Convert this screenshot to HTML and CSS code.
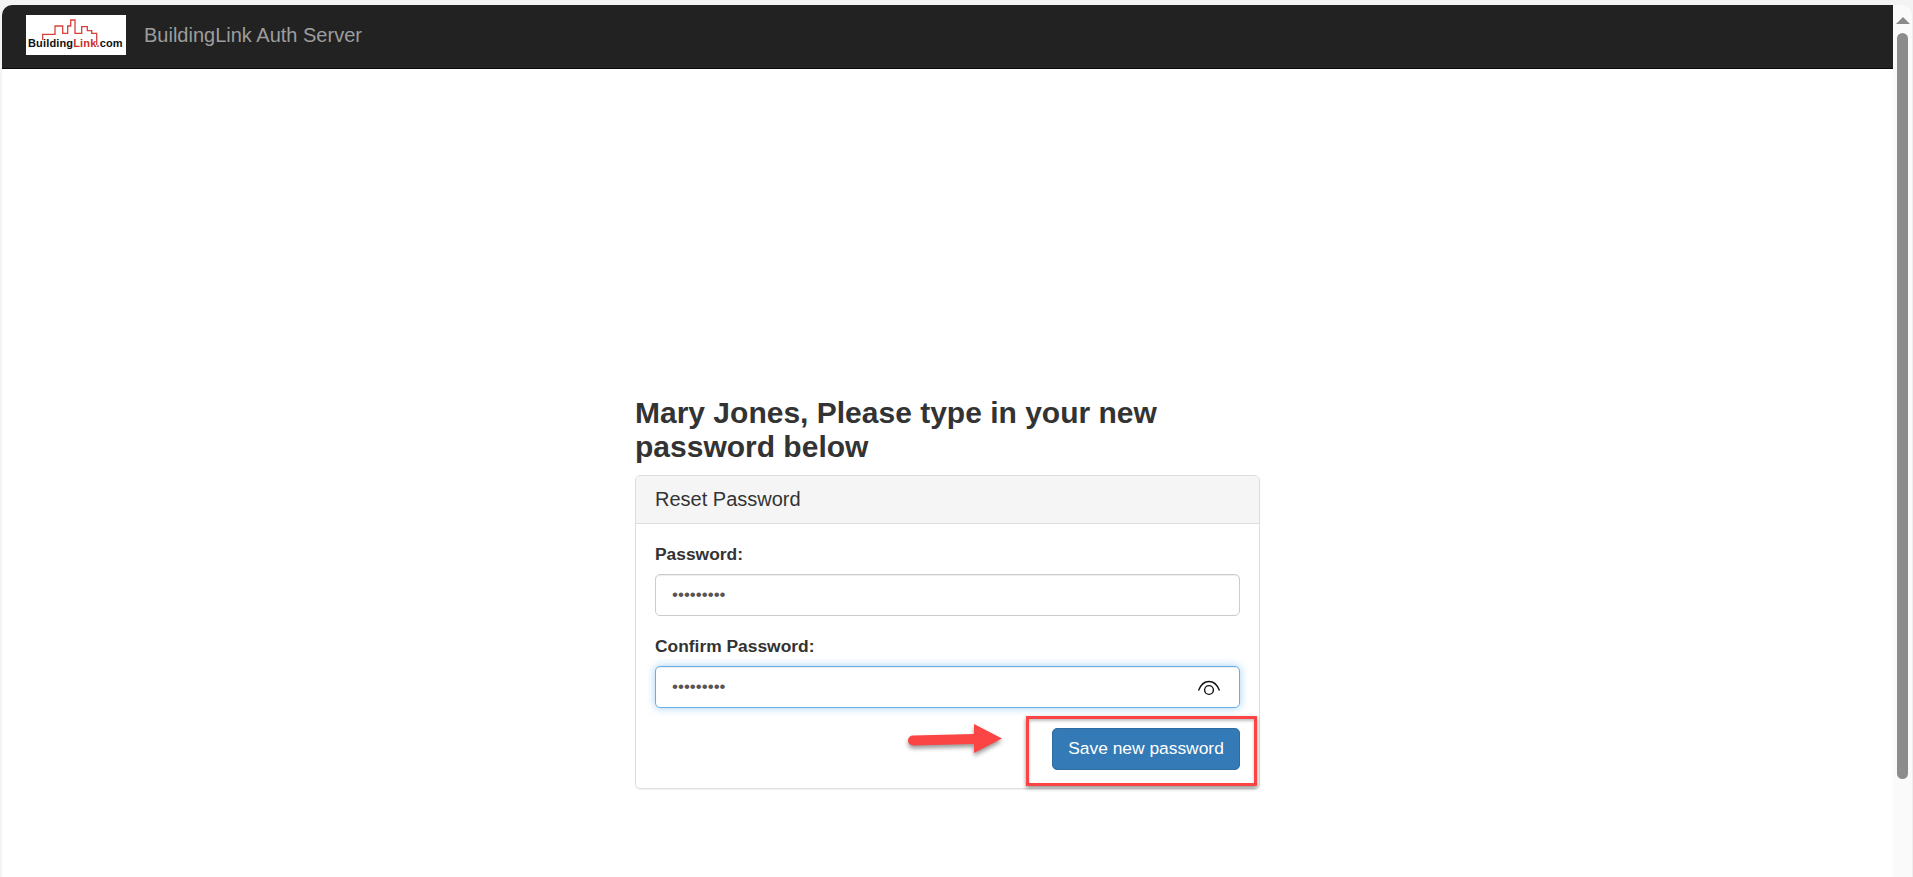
FILE: index.html
```
<!DOCTYPE html>
<html lang="en">
<head>
<meta charset="utf-8">
<title>BuildingLink Auth Server</title>
<link rel="stylesheet" href="styles.css">
</head>
<body>
<div class="window">
  <div class="main">
    <nav class="navbar">
      <div class="logo">
        <svg class="logo-skyline" viewBox="0 0 100 40" width="100" height="40" aria-hidden="true">
          <path d="M16.7 25V19.3H29V11H36.7V18.3H41.7V11H44.7V5H49V18.3H55.7V11.7H61.3V15.7H65.7V18.3H70.7V30" fill="none" stroke="#d8403c" stroke-width="1.3"/>
        </svg>
        <span class="logo-text">Building<span class="logo-red">Link</span><span class="logo-dot">.</span>com</span>
      </div>
      <a class="brand">BuildingLink Auth Server</a>
    </nav>
    <div class="content">
      <div class="column">
        <h1 class="title">Mary Jones, Please type in your new password below</h1>
        <div class="card">
          <div class="card-header">Reset Password</div>
          <form class="card-body">
            <div class="group">
              <label class="label">Password:</label>
              <input class="input" type="password" value="123456789">
            </div>
            <div class="group">
              <label class="label">Confirm Password:</label>
              <div class="input-wrap">
                <input class="input input-focus" type="password" value="123456789">
                <svg class="eye" viewBox="0 0 24 16" width="24" height="16" aria-hidden="true">
                  <path d="M1.5 10.5C4 4 8 1.5 12 1.5S20 4 22.5 10.5" fill="none" stroke="#111" stroke-width="1.4"/>
                  <circle cx="12" cy="10" r="4.4" fill="none" stroke="#111" stroke-width="1.4"/>
                </svg>
              </div>
            </div>
            <div class="actions">
              <button class="btn" type="button">Save new password</button>
            </div>
          </form>
          <div class="highlight"></div>
          <svg class="arrow" viewBox="0 0 100 36" width="100" height="36" aria-hidden="true">
            <path d="M5 11.5L66 10V0L94 14.5L66 29V20L5 21.5A5 5 0 0 1 5 11.5Z" fill="#fb4444"/>
          </svg>
        </div>
      </div>
    </div>
  </div>
  <div class="scrollbar">
    <div class="scroll-up"></div>
    <div class="scroll-thumb"></div>
  </div>
</div>
</body>
</html>
```
FILE: styles.css
```
* { box-sizing: border-box; }
html, body { margin: 0; height: 100%; overflow: hidden; }
body {
  background: #f3f3f3;
  font-family: "Liberation Sans", Arial, sans-serif;
  color: #333;
}
.window {
  display: flex;
  height: 877px;
  padding: 5px 0 0 2px;
}
.main {
  flex: 1;
  min-width: 0;
  display: flex;
  flex-direction: column;
  background: #fff;
  border-top-left-radius: 10px;
}
.navbar {
  height: 64px;
  flex: none;
  display: flex;
  align-items: center;
  gap: 18px;
  padding: 0 0 3px 24px;
  background: #222;
  border-bottom: 1px solid #080808;
  border-top-left-radius: 10px;
}
.logo {
  position: relative;
  width: 100px;
  height: 40px;
  background: #fff;
  overflow: hidden;
}
.logo-skyline { position: absolute; left: 0; top: 0; display: block; }
.logo-text {
  position: absolute;
  left: 2px;
  top: 21px;
  font-size: 11px;
  line-height: 14px;
  font-weight: bold;
  letter-spacing: 0.15px;
  color: #111;
  white-space: nowrap;
}
.logo-red { color: #c9302c; }
.logo-dot { color: #c9302c; }
.brand {
  font-size: 20px;
  line-height: 24px;
  color: #9d9d9d;
}
.content {
  flex: 1;
  display: flex;
  justify-content: center;
  padding-top: 327px;
}
.column { width: 625px; }
.title {
  margin: 0 0 11px;
  font-size: 30px;
  line-height: 34px;
  font-weight: bold;
  color: #333;
}
.card {
  position: relative;
  height: 314px;
  background: #fff;
  border: 1px solid #ddd;
  border-radius: 5px;
  box-shadow: 0 1px 1px rgba(0,0,0,.05);
}
.card-header {
  height: 48px;
  padding: 0 19px;
  display: flex;
  align-items: center;
  font-size: 20px;
  background: #f5f5f5;
  border-bottom: 1px solid #ddd;
  border-radius: 4px 4px 0 0;
}
.card-body {
  display: flex;
  flex-direction: column;
  gap: 18px;
  padding: 18px 19px 0;
}
.label {
  display: block;
  margin-bottom: 8px;
  font-size: 17.4px;
  line-height: 24px;
  font-weight: bold;
}
.input-wrap { position: relative; }
.input {
  display: block;
  width: 100%;
  height: 42px;
  padding: 0 16px;
  font-family: inherit;
  font-size: 17px;
  color: #555;
  background: #fff;
  border: 1px solid #ccc;
  border-radius: 5px;
  box-shadow: inset 0 1px 1px rgba(0,0,0,.075);
  outline: none;
}
.input-focus {
  border-color: #66afe9;
  box-shadow: inset 0 1px 1px rgba(0,0,0,.075), 0 0 8px rgba(102,175,233,.6);
}
.eye {
  position: absolute;
  right: 19px;
  top: 14px;
}
.actions {
  display: flex;
  justify-content: flex-end;
  margin-top: 2px;
}
.btn {
  width: 188px;
  height: 42px;
  padding: 0 0 2px;
  font-family: inherit;
  font-size: 17.4px;
  color: #fff;
  background: #337ab7;
  border: 1px solid #2e6da4;
  border-radius: 5px;
}
.highlight {
  position: absolute;
  left: 390px;
  top: 240px;
  width: 231px;
  height: 70px;
  border: 3px solid #fb4444;
  box-shadow: 0 2px 4px rgba(0,0,0,.45), inset 0 2px 3px rgba(0,0,0,.25);
}
.arrow {
  position: absolute;
  left: 272px;
  top: 248px;
  filter: drop-shadow(0 3px 2px rgba(0,0,0,.4));
}
.scrollbar {
  position: relative;
  width: 20px;
  flex: none;
  background: #fafafa;
  border-top-right-radius: 10px;
  display: flex;
  flex-direction: column;
  align-items: center;
  border-right: 1px solid #eee;
}
.scroll-up {
  margin-top: 12px;
  width: 0;
  height: 0;
  border-left: 7px solid transparent;
  border-right: 7px solid transparent;
  border-bottom: 7px solid #8a8a8a;
}
.scroll-thumb {
  margin-top: 9px;
  width: 11px;
  height: 746px;
  background: #8c8c8c;
  border-radius: 6px;
}
```
